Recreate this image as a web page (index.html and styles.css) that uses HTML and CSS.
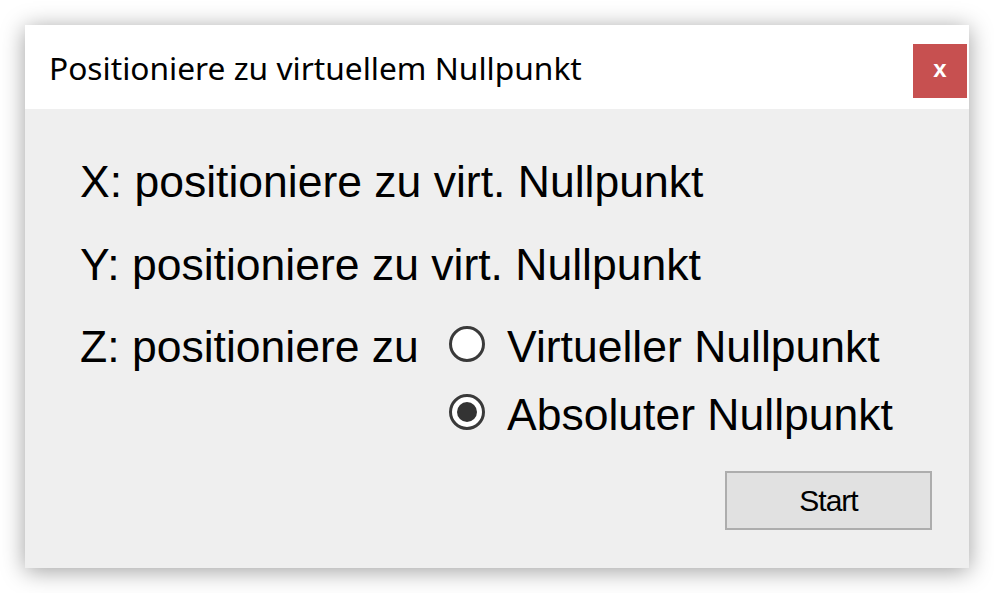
FILE: index.html
```html
<!DOCTYPE html>
<html lang="de">
<head>
<meta charset="utf-8">
<title>Positioniere zu virtuellem Nullpunkt</title>
<link rel="stylesheet" href="styles.css">
</head>
<body>
<div class="window">
  <div class="titlebar">
    <div class="title">Positioniere zu virtuellem Nullpunkt</div>
    <div class="close">x</div>
  </div>
  <div class="content">
    <div class="line">X: positioniere zu virt. Nullpunkt</div>
    <div class="line">Y: positioniere zu virt. Nullpunkt</div>
    <div class="zrow">
      <div class="zlabel">Z: positioniere zu</div>
      <div class="radios">
        <div class="radio-row"><span class="radio"></span><span>Virtueller Nullpunkt</span></div>
        <div class="radio-row"><span class="radio checked"></span><span>Absoluter Nullpunkt</span></div>
      </div>
    </div>
    <div class="footer">
      <div class="button">Start</div>
    </div>
  </div>
</div>
</body>
</html>
```
FILE: styles.css
```css
html, body {
  margin: 0;
  padding: 0;
  background: #ffffff;
}
body {
  width: 994px;
  height: 593px;
  overflow: hidden;
}
.window {
  margin: 25px 0 0 25px;
  width: 944px;
  height: 543px;
  display: flex;
  flex-direction: column;
  background: #efefef;
  box-shadow: 0 3px 22px rgba(0, 0, 0, 0.38);
}
.titlebar {
  height: 84px;
  background: #ffffff;
  display: flex;
  align-items: flex-start;
  justify-content: space-between;
}
.title {
  font-family: "Noto Sans", sans-serif;
  font-size: 31.7px;
  color: #000;
  margin: 22px 0 0 24px;
  line-height: 42px;
}
.close {
  width: 54px;
  height: 54px;
  margin: 19px 2px 0 0;
  background: #c75050;
  color: #fff;
  font-family: "Liberation Sans", Arial, sans-serif;
  font-weight: bold;
  font-size: 24px;
  line-height: 50px;
  text-align: center;
}
.content {
  flex: 1;
  padding: 31px 37px 0 55px;
  font-family: "Liberation Sans", Arial, sans-serif;
  font-size: 44.5px;
  color: #000;
}
.line {
  line-height: 83px;
  height: 83px;
}
.zrow {
  display: flex;
  align-items: flex-start;
  margin-top: 7px;
  line-height: 68px;
}
.zlabel {
  width: 369px;
}
.radios {
  display: flex;
  flex-direction: column;
}
.radio-row {
  display: flex;
  align-items: center;
  height: 68px;
}
.radio {
  box-sizing: border-box;
  width: 36px;
  height: 36px;
  border-radius: 50%;
  border: 3px solid #3a3a3a;
  background: #ffffff;
  margin: 0 22px 6px 0;
  display: flex;
  align-items: center;
  justify-content: center;
}
.radio.checked::after {
  content: "";
  width: 20px;
  height: 20px;
  border-radius: 50%;
  background: #333333;
}
.footer {
  display: flex;
  justify-content: flex-end;
  margin-top: 22px;
}
.button {
  box-sizing: border-box;
  width: 207px;
  height: 59px;
  border: 2px solid #adadad;
  background: #e1e1e1;
  font-size: 30px;
  letter-spacing: -1px;
  line-height: 55px;
  text-align: center;
}
```
